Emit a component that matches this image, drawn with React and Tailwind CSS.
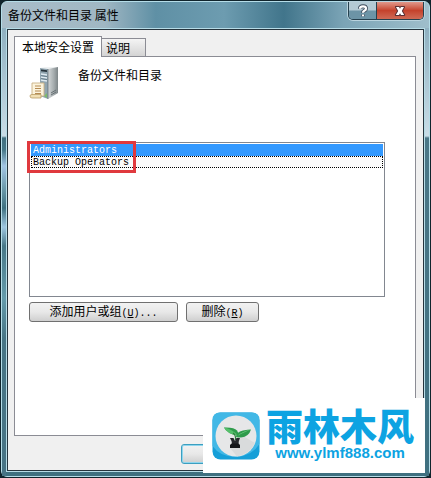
import React from 'react';
import { clsx } from 'clsx';

const principals = [
  { name: 'Administrators', selected: true },
  { name: 'Backup Operators', focused: true },
];

const ServerIcon = () => (
  <svg viewBox="0 0 32 34" className="w-8 h-[34px]" aria-hidden="true">
    <defs>
      <linearGradient id="serverSide" x1="0" y1="0" x2="1" y2="0">
        <stop offset="0" stopColor="#d3d7d8" />
        <stop offset="0.6" stopColor="#a4abad" />
        <stop offset="1" stopColor="#7d8587" />
      </linearGradient>
    </defs>
    <path d="M11 2 L16 1 L29 1 L20 3 Z" fill="#eef1f2" />
    <path d="M11 2 L19 3 L19 33 L11 30 Z" fill="#91a5b0" />
    <path d="M19 3 L29 1 L29 27 L19 33 Z" fill="url(#serverSide)" />
    <path d="M12 3.5 L18 4.2 V6 L12 5.3 Z" fill="#26323a" />
    <path d="M12 8 L18 9 M12 11 L18 12 M12 14 L18 15" stroke="#dfeaf0" strokeWidth="1.3" />
    <path d="M12 9.6 L18 10.6 M12 12.6 L18 13.6" stroke="#5f7685" strokeWidth="0.8" />
    <path d="M19 3 V33" stroke="#5d686d" strokeWidth="0.7" />
    <path d="M22 27 L27 24 M22 29 L27 26" stroke="#667074" strokeWidth="1" />
    <path d="M15 30 L18 27 L18 32 Z" fill="#7dbb6a" />
    <path d="M3 17 H15 V30 H3 Z" fill="#fbf3dc" stroke="#c9b183" strokeWidth="0.9" />
    <path d="M6 20 H12 M6 22.5 H12 M6 25 H12 M6 27.5 H12" stroke="#b58a52" strokeWidth="1" />
    <path d="M1 30 Q1 28.5 3 28.5 H12 V32 H3 Q1 32 1 30 Z" fill="#f1dfb5" stroke="#b99b63" strokeWidth="0.8" />
  </svg>
);

const SproutLogo = () => (
  <svg viewBox="0 0 48 48" className="w-12 h-12 shrink-0" aria-hidden="true">
    <rect x="0.5" y="0.5" width="47" height="47" rx="8" fill="#169fd8" />
    <path d="M8 0.5 H40 Q47.5 0.5 47.5 8 V32 Q40 44 24 45 Q8 45 0.5 34 V8 Q0.5 0.5 8 0.5 Z" fill="#42b8e6" />
    <circle cx="24" cy="24" r="20.5" fill="#e6e7e8" />
    <path d="M18 36 L31 24 L43 31 Q38 42 25 44.5 Z" fill="#d9dbdc" />
    <path d="M12 15.5 Q22 15 25 18.5 Q27 21 26 23.5 Q15 22 12 15.5 Z" fill="#2f9b4c" />
    <path d="M12 15.5 Q20 17 26 23.5 Q15 22 12 15.5 Z" fill="#55bf6b" />
    <path d="M24 25 Q24 20 31 18.5 Q36 17.5 39 17.5 Q37 24.5 29 25.5 Q26 25.5 24 25 Z" fill="#2f9b4c" />
    <path d="M25 24 Q31 19 39 17.5 Q34 19 25 24 Z" fill="#74d183" />
    <path d="M21 21 Q24 23 23.5 28" stroke="#2f7f3e" strokeWidth="1.2" fill="none" />
    <path d="M18 26 H21.5 L23 29 L24.5 26 H28 Q26.5 29 26.5 32 H20 Q20 29 18 26 Z" fill="#26282c" />
    <path d="M19.5 31.5 H26.5 L28 33 V36 H18 V33 Z" fill="#15171a" />
  </svg>
);

const PushButton = ({ children, className, ...props }) => (
  <button
    type="button"
    className={clsx(
      'h-5 rounded-[3px] border text-xs leading-none whitespace-nowrap',
      'bg-linear-to-b from-[#f2f2f2] via-[#e8e8e8] to-[#cfcfcf]',
      className
    )}
    {...props}
  >
    {children}
  </button>
);

// Accelerator key shown after a button label
const AccessKey = ({ letter, suffix }) => (
  <span className="font-['Liberation_Mono',monospace] text-[10px]">
    (<u>{letter}</u>){suffix}
  </span>
);

const TitleBar = () => (
  <header className="flex h-[26px] items-start justify-between pl-1.5 pr-[5px]">
    <h1 className="pt-1 text-xs leading-[18px] text-black">备份文件和目录 属性</h1>
    <div className="flex h-[18px] overflow-hidden rounded-b-[5px] border border-t-0 border-[#26414e] shadow-[0_0_0_1px_#b9d3de]">
      <button
        type="button"
        aria-label="帮助"
        className="flex w-7 items-center justify-center border-r border-[#26414e] bg-linear-to-b from-[#b4cad4] from-45% to-[#6c94a6] to-55%"
      >
        <svg viewBox="0 0 12 14" className="w-3 h-3.5" fill="none">
          <path d="M3 4.8 Q3 2.3 6 2.3 Q9 2.3 9 4.6 Q9 6 7.3 6.8 Q6 7.5 6 8.8 M6 10.4 V12.2" stroke="#3c4a5a" strokeWidth="4" />
          <path d="M3 4.8 Q3 2.3 6 2.3 Q9 2.3 9 4.6 Q9 6 7.3 6.8 Q6 7.5 6 8.8 M6 10.4 V12.2" stroke="#fff" strokeWidth="2.3" />
        </svg>
      </button>
      <button
        type="button"
        aria-label="关闭"
        className="flex w-[46px] items-center justify-center bg-linear-to-b from-[#e0988b] via-[#c5422c] via-50% to-[#cf6a55]"
      >
        <svg viewBox="0 0 14 12" className="w-3.5 h-3" fill="none">
          <path d="M3 2 H6 L7 3.8 L8 2 H11 L8.8 6 L11.2 10 H8 L7 8.2 L6 10 H2.8 L5.2 6 Z" fill="#fff" stroke="#5a3034" strokeWidth="2" strokeLinejoin="round" />
          <path d="M3 2 H6 L7 3.8 L8 2 H11 L8.8 6 L11.2 10 H8 L7 8.2 L6 10 H2.8 L5.2 6 Z" fill="#fff" />
        </svg>
      </button>
    </div>
  </header>
);

const TabBar = () => (
  <div role="tablist" className="flex items-end text-xs">
    <button
      type="button"
      role="tab"
      aria-selected="true"
      className="relative -mb-px h-[21px] border border-b-0 border-[#8b8c94] bg-white px-[7px] leading-none"
    >
      本地安全设置
    </button>
    <button
      type="button"
      role="tab"
      aria-selected="false"
      className="h-[18px] border border-b-0 border-l-0 border-[#8b8c94] bg-linear-to-b from-[#f4f4f4] to-[#d4d4d4] pl-1 pr-[15px] leading-none"
    >
      说明
    </button>
  </div>
);

const PrincipalList = () => (
  <div className="relative">
    <ul
      role="listbox"
      aria-label="备份文件和目录"
      className="h-[155px] border border-[#828790] bg-white p-px font-['Liberation_Mono','Noto_Sans_CJK_SC',monospace] text-[10px]"
    >
      {principals.map((item) => (
        <li
          key={item.name}
          role="option"
          aria-selected={Boolean(item.selected)}
          className={clsx(
            'h-3 border pl-px leading-[11px]',
            item.selected && 'border-[#3399ff] bg-[#3399ff] text-white',
            item.focused && 'border-dotted border-black bg-[#fafafa] text-black'
          )}
        >
          {item.name}
        </li>
      ))}
    </ul>
    <div className="pointer-events-none absolute -left-0.5 -top-px h-8 w-[109px] border-3 border-[#e0393e]" />
  </div>
);

const Watermark = () => (
  <div className="absolute bottom-[5px] right-1.5 flex h-[75px] w-[222px] items-center gap-1.5 bg-white pl-[9px] text-[#0da3e2]">
    <SproutLogo />
    <div className="flex flex-col items-center pb-1">
      <strong className="font-['Noto_Sans_CJK_SC',sans-serif] text-[37px] font-black leading-9 whitespace-nowrap">
        雨林木风
      </strong>
      <a href="#home" className="pt-0.5 font-['Liberation_Sans',sans-serif] text-[15px] font-bold leading-4">
        www.ylmf888.com
      </a>
    </div>
  </div>
);

const App = () => {
  return (
    <div className="relative flex min-h-screen flex-col bg-[#10242c] p-px font-['Noto_Sans_CJK_SC',sans-serif] text-black">
      <div className="flex flex-1 flex-col rounded-[6px] border border-[#b5dde8] bg-[linear-gradient(to_right,#a9bdc9_0%,#a0b7c3_24%,#5f90a5_36%,#6d9cb0_52%,#41758b_66%,#7ba4b6_80%,#9fbecb_100%)]">
        <TitleBar />
        <div className="flex flex-1 flex-col bg-[linear-gradient(to_bottom,#8fb0c0_0,#c9dce6_108px,#4b7787_110px,#3f7080_100%)]">
          <div className="flex flex-1 flex-col bg-[linear-gradient(to_bottom,#8fb0c0_0,#c9dce6_108px,#416f7f_110px,#477888_122px,#a3c5e4_138px,#6d9bac_160px,#3f7080_180px,#9fc6e0_199px,#487787_218px,#659bab_270px,#487585_310px,#487485_100%)] bg-[length:4px_100%] bg-no-repeat px-1 pb-1">
            <div className="flex flex-1 flex-col border border-[#b7dce7]">
              <main className="flex flex-1 flex-col border border-[#26343d] bg-[#f0f0f0] pb-1.5 pl-1.5 pr-[7px] pt-1.5">
                <TabBar />
                <section className="flex-1 border border-[#8b8c94] bg-white px-3.5 pt-[9px]">
                  <div className="flex h-[76px] gap-[17px]">
                    <ServerIcon />
                    <h2 className="text-xs leading-[18px]">备份文件和目录</h2>
                  </div>
                  <div className="pr-4">
                    <PrincipalList />
                  </div>
                  <div className="flex gap-2 pt-[5px]">
                    <PushButton className="w-[149px] border-[#707070]">
                      添加用户或组<AccessKey letter="U" suffix="..." />
                    </PushButton>
                    <PushButton className="w-[73px] border-[#707070]">
                      删除<AccessKey letter="R" />
                    </PushButton>
                  </div>
                </section>
                <footer className="flex justify-end pr-[161px] pt-2">
                  <PushButton aria-label="确定" className="w-[74px] border-[#3c9fc0] shadow-[inset_0_0_0_1px_#8fd6ee]" />
                </footer>
              </main>
            </div>
          </div>
        </div>
      </div>
      <Watermark />
    </div>
  );
};

export default App;
